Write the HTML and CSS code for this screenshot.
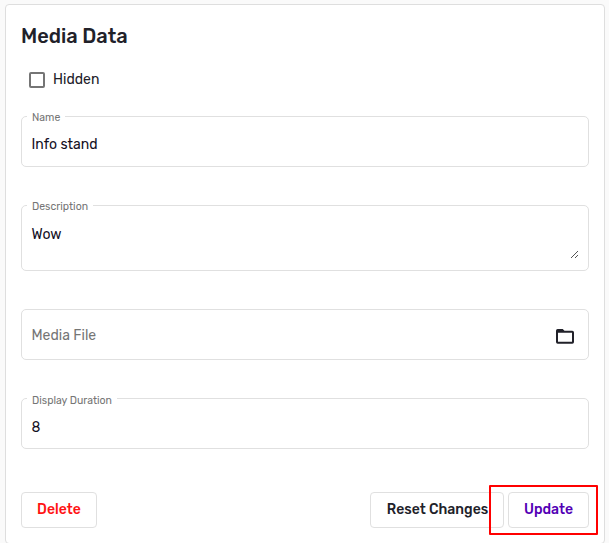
FILE: index.html
```html
<!DOCTYPE html>
<html lang="en">
<head>
<meta charset="utf-8">
<title>Media Data</title>
<link rel="stylesheet" href="styles.css">
</head>
<body>
<main class="card">
  <h1 class="title">Media Data</h1>
  <div class="check"><span class="box"></span><span class="check-label">Hidden</span></div>
  <div class="field">
    <span class="label">Name</span>
    <span class="value">Info stand</span>
  </div>
  <div class="field field-area">
    <span class="label">Description</span>
    <span class="value">Wow</span>
    <svg class="grip" width="9" height="9" viewBox="0 0 9 9" shape-rendering="crispEdges"><path d="M0.5 7.5L7.5 0.5M4.5 7.5L7.5 4.5" stroke="#555" fill="none"/></svg>
  </div>
  <div class="field field-file">
    <span class="value placeholder">Media File</span>
    <svg class="folder" width="18" height="15" viewBox="0 0 18 15"><path fill="#212129" fill-rule="evenodd" d="M1.6 0H6.7L8.5 1.8H16.3Q18 1.8 18 3.5V13Q18 14.7 16.3 14.7H1.7Q0 14.7 0 13V1.7Q0 0 1.6 0ZM2 3.8V12.8H16V3.8Z"/></svg>
  </div>
  <div class="field field-duration">
    <span class="label">Display Duration</span>
    <span class="value">8</span>
  </div>
  <div class="actions">
    <button class="btn btn-delete">Delete</button>
    <button class="btn btn-reset">Reset Changes</button>
    <button class="btn btn-update">Update</button>
    <span class="highlight"></span>
  </div>
</main>
</body>
</html>
```

FILE: styles.css
```css
* { box-sizing: border-box; }
html, body { height: 100%; overflow: hidden; }
body {
  margin: 0;
  padding: 4px 4px 0 5px;
  background: #fafafa;
  color: #212129;
  font-family: Rubik, Roboto, sans-serif;
  font-size: 14px;
}
.card {
  height: 540px;
  padding: 15px;
  background: #fff;
  border: 1px solid #dedede;
  border-radius: 4px;
}
.title {
  margin: 0;
  height: 32px;
  line-height: 32px;
  font-size: 20px;
  font-weight: 500;
}
.check {
  display: flex;
  align-items: center;
  gap: 8px;
  height: 24px;
  margin: 16px 0 24px;
  padding-left: 8px;
}
.box {
  width: 16px;
  height: 16px;
  border: 2px solid #757575;
  border-radius: 2px;
}
.check-label { line-height: 20px; }
.field {
  position: relative;
  display: flex;
  align-items: center;
  height: 51px;
  margin-bottom: 38px;
  padding: 7px 14px 0 9.5px;
  border: 1px solid #e0e0e0;
  border-radius: 5px;
}
.field-area { height: 66px; }
.field-area .value { margin-top: -13px; }
.field-file { padding-top: 2px; }
.field-file .folder { margin-top: 2px; }
.field-duration { padding-top: 9px; }
.label {
  position: absolute;
  top: -6px;
  left: 5px;
  padding: 0 5px;
  line-height: 13px;
  font-size: 10.5px;
  color: #757575;
  background: #fff;
}
.field-duration .label { top: -5px; }
.value {
  line-height: 20px;
  color: #14101f;
}
.placeholder { color: #757575; }
.folder { margin-left: auto; }
.grip {
  position: absolute;
  right: 9px;
  bottom: 10px;
}
.actions {
  position: relative;
  display: flex;
  gap: 4px;
  margin-top: 43px;
}
.btn {
  height: 36px;
  padding: 0 0 2px;
  background: #fff;
  border: 1px solid #e0e0e0;
  border-radius: 4px;
  color: #212129;
  font: inherit;
  font-weight: 500;
  white-space: nowrap;
}
.btn-delete { width: 76px; color: #ff1313; }
.btn-reset { width: 134px; margin-left: auto; padding-left: 1px; }
.btn-update { width: 81px; color: #5300b5; }
.highlight {
  position: absolute;
  top: -7px;
  right: -9px;
  width: 109px;
  height: 50px;
  border: 2px solid #ff0000;
  border-radius: 1px;
}
```
